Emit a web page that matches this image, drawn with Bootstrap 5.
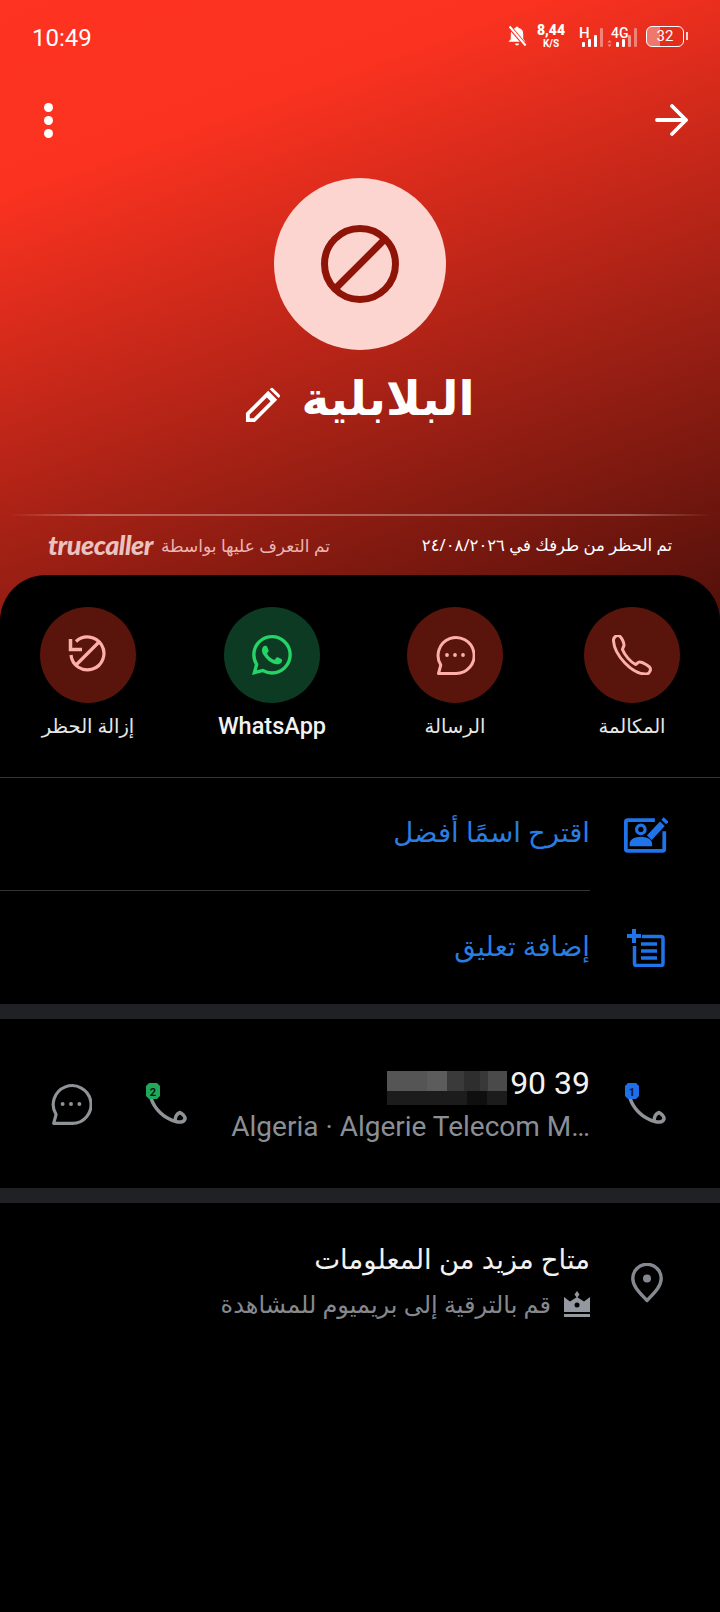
<!DOCTYPE html>
<html lang="ar" dir="rtl">
<head>
    <meta charset="UTF-8">
    <meta name="viewport" content="width=device-width, initial-scale=1.0">
    <title>Truecaller</title>
    <link rel="stylesheet" href="https://cdn.jsdelivr.net/npm/bootstrap@5.3.0/dist/css/bootstrap.min.css">
    <style>
        body { width: 720px; height: 1612px; background: #000; font-family: "Noto Sans", "DejaVu Sans", sans-serif; overflow: hidden; }
        .hero { height: 621px; background: linear-gradient(160deg, #fe3320 0%, #fb3220 22%, #50100a 100%); color: #fff; }
        .status-bar { height: 72px; padding: 0 32px 0 32px; font-family: Roboto, sans-serif; }
        .clock { font-size: 24px; font-weight: 400; }
        .speed { width: 30px; font-weight: 700; line-height: 1; text-align: center; margin: 0 0 0 9px; }
        .speed b { display: block; font-size: 14px; }
        .speed i { display: block; font-size: 10px; font-style: normal; margin-top: 2px; }
        .sig-h { margin-left: 13px; }
        .batt { width: 38px; height: 21px; border: 1.5px solid #fff; border-radius: 6px; font-size: 15px; line-height: 18px; text-align: center; margin-left: 7px; background: linear-gradient(90deg, rgba(255,255,255,.35) 0 36%, transparent 36%); }
        .batt-nub { width: 2px; height: 8px; background: #fff; opacity: .8; margin-left: 2px; }
        .tool-row { height: 96px; padding: 0 32px 0 42px; }
        .dots { width: 12px; gap: 4px; }
        .dots span { width: 9px; height: 9px; border-radius: 50%; background: #fff; }
        .avatar { width: 172px; height: 172px; border-radius: 50%; background: #fdd5d0; margin: 10px auto 0; }
        .name-row { height: 164px; gap: 20px; padding-top: 19px; }
        .name-text { font-size: 47px; font-weight: 700; line-height: 56px; }
        .pen-icon { margin-top: 18px; }
        .hero-line { height: 2px; margin: 0 8px; background: linear-gradient(90deg, transparent, rgba(255,255,255,.32) 12%, rgba(255,255,255,.32) 88%, transparent); }
        .meta-row { height: 59px; padding: 0 48px; font-size: 16.500px; }
        .meta-soft { color: #eab5b0; gap: 8px; font-size: 17px; }
        .tc-logo { font-family: Lato, sans-serif; font-weight: 900; font-style: italic; font-size: 27px; letter-spacing: -.5px; direction: ltr; color: #eac2be; }
        .sheet { background: #000; border-radius: 46px 46px 0 0; margin-top: -46px; position: relative; color: #fff; }
        .action-grid { display: grid; grid-template-columns: 177px 183px 184px 96px; padding: 32px 40px 0; height: 202px; }
        .action { width: 96px; }
        .action-ring { width: 96px; height: 96px; border-radius: 50%; background: #59140b; color: #fdb0a8; }
        .ring-green { background: #0c3a22; color: #25d366; }
        .action-label { font-size: 19.500px; white-space: nowrap; color: #e6e6e6; margin-top: 10px; line-height: 26px; }
        .wa-label { font-family: Roboto, sans-serif; font-weight: 500; font-size: 23.500px; color: #f2f2f2; }
        .top-rule { height: 1px; background: #333; }
        .link-row { height: 113px; padding-right: 52px; color: #2a7de1; font-size: 27.500px; }
        .icon-cell { width: 44px; flex: none; margin-left: 34px; }
        .link-text { flex-grow: 1; height: 100%; padding-bottom: 4px; }
        .link-rule { border-bottom: 1px solid #333; }
        .band { height: 15px; background: #1f2124; }
        .num-row { height: 169px; padding-right: 52px; }
        .num-title { font-family: Roboto, sans-serif; font-size: 32px; color: #f2f2f2; line-height: 34px; gap: 3px; }
        .num-mask { width: 120px; height: 34px; transform: translateY(5px); background:
            linear-gradient(90deg, #1c1c1c 0 80px, #0f0f0f 80px 100px, #1c1c1c 100px) 0 100% / 100% 14px no-repeat,
            linear-gradient(90deg, #555 0 40px, #5c5c5c 40px 60px, #3a3a3a 60px 77px, #2e2e2e 77px 93px, #383838 93px 101px, #4a4a4a 101px) 0 0 / 100% 20px no-repeat; }
        .num-sub { font-family: Roboto, sans-serif; font-size: 28px; color: #8a8f96; line-height: 30px; margin-top: 12px; white-space: nowrap; }
        .num-side { width: 359px; flex: none; }
        .num-icons { margin-right: 43px; }
        .num-icon { width: 42px; flex: none; }
        .msg-gap { margin-right: 54px; }
        .info-row { padding: 40px 51px 0 0; }
        .pin-cell { margin-top: 20px; margin-left: 35px; }
        .info-title { font-size: 27.500px; line-height: 32px; color: #f2f2f2; }
        .info-sub { font-size: 24px; line-height: 30px; color: #85898f; gap: 13px; margin-top: 14px; }
    </style>
</head>
<body>
    <div class="hero">
        <!-- status bar -->
        <div class="status-bar d-flex align-items-center" dir="ltr">
            <span class="clock me-auto mt-1">10:49</span>
            <svg width="20" height="22" viewBox="0 0 20 22"><path d="M10 1.500a1.600 1.600 0 0 1 1.600 1.600 6 6 0 0 1 4.600 6v5l2.300 2.600H1.500l2.300-2.600v-5a6 6 0 0 1 4.600-6A1.600 1.600 0 0 1 10 1.500zM8 18.500h4a2 2 0 0 1-4 0z" fill="#fff"/><path d="M2 1l16 19" stroke="#f9321f" stroke-width="4"/><path d="M2.600 1.500l16 19" stroke="#fff" stroke-width="2"/></svg>
            <div class="speed"><b>8,44</b><i>K/S</i></div>
            <svg class="sig-h" width="28" height="24" viewBox="0 0 28 24" fill="#fff">
                <text x="0" y="14" font-family="Roboto, sans-serif" font-size="15" font-weight="500">H</text>
                <rect x="3" y="18" width="3" height="5" rx="1"/><rect x="9" y="15" width="3" height="8" rx="1"/><rect x="15" y="11" width="3" height="12" rx="1"/><rect x="21" y="4" width="3" height="19" rx="1" opacity=".4"/>
            </svg>
            <svg width="32" height="24" viewBox="0 0 32 24" fill="#fff">
                <text x="4" y="14" font-family="Roboto, sans-serif" font-size="14" font-weight="500">4G</text>
                <path d="M2.500 16l2 2.500h-4zM2.500 23l-2-2.500h4z" opacity=".5"/>
                <rect x="9" y="18" width="3" height="5" rx="1"/><rect x="15" y="15" width="3" height="8" rx="1"/><rect x="21" y="11" width="3" height="12" rx="1" opacity=".5"/><rect x="27" y="4" width="3" height="19" rx="1" opacity=".4"/>
            </svg>
            <div class="batt">32</div>
            <div class="batt-nub"></div>
        </div>

        <!-- back and menu -->
        <div class="tool-row d-flex align-items-center justify-content-between" dir="ltr">
            <div class="dots d-flex flex-column align-items-center"><span></span><span></span><span></span></div>
            <svg width="33" height="32" viewBox="0 0 33 32" fill="none" stroke="#fff" stroke-width="3.800" stroke-linecap="round" stroke-linejoin="round"><path d="M2 16h29M17 2l14 14-14 14"/></svg>
        </div>

        <div class="avatar d-flex align-items-center justify-content-center">
            <svg width="80" height="80" viewBox="0 0 80 80" fill="none" stroke="#8e1408" stroke-width="7"><circle cx="40" cy="40" r="35.500"/><path d="M15 65L65 15"/></svg>
        </div>

        <div class="name-row d-flex align-items-start justify-content-center">
            <span class="name-text">البلابلية</span>
            <svg class="pen-icon" width="36" height="36" viewBox="0 0 38 38" fill="#fff"><path d="M1 37v-9.500L24.500 4 34 13.500 10.500 37zM5 33h4l18-18-4-4L5 29zM27 1.500a2 2 0 0 1 2.800 0l6.500 6.500a2 2 0 0 1 0 2.800L35.500 11.500 26 2.500z" fill-rule="evenodd"/></svg>
        </div>

        <div class="hero-line"></div>
        <div class="meta-row d-flex align-items-center justify-content-between">
            <span>تم الحظر من طرفك في ٢٤/٠٨/٢٠٢٦</span>
            <span class="meta-soft d-flex align-items-center">تم التعرف عليها بواسطة <span class="tc-logo">truecaller</span></span>
        </div>
    </div>

    <div class="sheet">
        <div class="action-grid">
            <div class="action d-flex flex-column align-items-center">
                <div class="action-ring d-flex align-items-center justify-content-center">
                    <svg width="40" height="40" viewBox="0 0 40 40" fill="none" stroke="currentColor" stroke-width="3"><path d="M1.500 6C1 2 5-.5 7.500 1c2 1.500 4.500 6 4.500 9 0 2-1.500 3-1.500 4.500 2 5.500 8 12.500 13 15 1.500-.5 2.500-3 4.500-2.500 3 .5 7 3 9.500 5 2 2 .5 6.500-3 7C20 39.500 2.500 20 1.500 6z" stroke-linejoin="round"/></svg>
                </div>
                <span class="action-label">المكالمة</span>
            </div>
            <div class="action d-flex flex-column align-items-center">
                <div class="action-ring d-flex align-items-center justify-content-center">
                    <svg width="40" height="40" viewBox="0 0 40 40" fill="none" stroke="currentColor" stroke-width="3"><path d="M3.500 38.500H21A18 18 0 1 0 5.800 30z" stroke-linejoin="round"/><g fill="currentColor" stroke="none"><circle cx="12" cy="20" r="1.900"/><circle cx="20" cy="20" r="1.900"/><circle cx="28" cy="20" r="1.900"/></g></svg>
                </div>
                <span class="action-label">الرسالة</span>
            </div>
            <div class="action d-flex flex-column align-items-center">
                <div class="action-ring ring-green d-flex align-items-center justify-content-center">
                    <svg width="40" height="40" viewBox="0 0 16 16" fill="currentColor"><path d="M13.601 2.326A7.854 7.854 0 0 0 7.994 0C3.627 0 .068 3.558.064 7.926c0 1.399.366 2.760 1.057 3.965L0 16l4.204-1.102a7.933 7.933 0 0 0 3.790.965h.004c4.368 0 7.926-3.558 7.930-7.930A7.898 7.898 0 0 0 13.600 2.326zM7.994 14.521a6.573 6.573 0 0 1-3.356-.920l-.240-.144-2.494.654.666-2.433-.156-.251a6.560 6.560 0 0 1-1.007-3.505c0-3.626 2.957-6.584 6.591-6.584a6.560 6.560 0 0 1 4.660 1.931 6.557 6.557 0 0 1 1.928 4.660c-.004 3.639-2.961 6.592-6.592 6.592zm3.615-4.934c-.197-.099-1.170-.578-1.353-.646-.182-.065-.315-.099-.445.099-.133.197-.513.646-.627.775-.114.133-.232.148-.430.050-.197-.100-.836-.308-1.592-.985-.590-.525-.985-1.175-1.103-1.372-.114-.198-.011-.304.088-.403.087-.088.197-.232.296-.346.100-.114.133-.198.198-.330.065-.134.034-.248-.015-.347-.050-.099-.445-1.076-.612-1.470-.160-.389-.323-.335-.445-.340-.114-.007-.247-.007-.380-.007a.729.729 0 0 0-.529.247c-.182.198-.691.677-.691 1.654 0 .977.710 1.916.810 2.049.098.133 1.394 2.132 3.383 2.992.470.205.840.326 1.129.418.475.152.904.129 1.246.080.380-.058 1.171-.480 1.338-.943.164-.464.164-.860.114-.943-.049-.084-.182-.133-.380-.232z"/></svg>
                </div>
                <span class="action-label wa-label">WhatsApp</span>
            </div>
            <div class="action d-flex flex-column align-items-center">
                <div class="action-ring d-flex align-items-center justify-content-center">
                    <svg width="40" height="40" viewBox="0 0 40 40" fill="none" stroke="currentColor" stroke-width="3.200"><path d="M8 6.500A16.500 16.500 0 1 1 3 20"/><path d="M31 7L8 30"/><path d="M2.500 4v10.500H14" stroke-width="3.500"/></svg>
                </div>
                <span class="action-label">إزالة الحظر</span>
            </div>
        </div>

        <div class="top-rule"></div>

        <div class="link-row d-flex align-items-center">
            <div class="icon-cell d-flex justify-content-center">
                <svg width="47" height="38" viewBox="0 0 47 38" fill="none"><path d="M33 3H4a2 2 0 0 0-2 2v29a2 2 0 0 0 2 2h37a2 2 0 0 0 2-2V15" stroke="#1f74ea" stroke-width="4"/><circle cx="18" cy="13" r="4.500" stroke="#1f74ea" stroke-width="3.500"/><path d="M6 31v-3c0-4 6-7 12-7s12 3 12 7v3z" fill="#1f74ea"/><path d="M27 22L41 7" stroke="#1f74ea" stroke-width="7"/><path d="M42.500 5.200L45 2.500" stroke="#1f74ea" stroke-width="7"/></svg>
            </div>
            <div class="link-text link-rule d-flex align-items-center">اقترح اسمًا أفضل</div>
        </div>
        <div class="link-row d-flex align-items-center">
            <div class="icon-cell d-flex justify-content-center">
                <svg width="38" height="38" viewBox="0 0 38 38" fill="none" stroke="#1f74ea" stroke-width="3.500"><path d="M15 7.500h19a2 2 0 0 1 2 2v25a2 2 0 0 1-2 2H9.500a2 2 0 0 1-2-2V17"/><path d="M0 7h14M7 0v14" stroke-width="4"/><path d="M14 15h16M14 22h16M14 29h16"/></svg>
            </div>
            <div class="link-text d-flex align-items-center">إضافة تعليق</div>
        </div>

        <div class="band"></div>

        <div class="num-row d-flex align-items-center">
            <div class="icon-cell d-flex justify-content-center">
                <svg width="42" height="42" viewBox="0 0 42 42" fill="none"><path d="M5 15C8 25 17 35 30 38.500c3 1 8 1 9-2.500.500-2.500-3-5.500-5-6.500-3 1-5.500 4.500-4.500 9" stroke="#8f9296" stroke-width="3.500" stroke-linejoin="round"/><path d="M3 0h8l3 3v10l-3 3H3l-3-3V3z" fill="#1f6fe8"/><text x="7" y="12.500" font-family="Roboto, sans-serif" font-size="11" font-weight="700" fill="#0a1c33" text-anchor="middle">1</text></svg>
            </div>
            <div class="num-side d-flex flex-column align-items-start">
                <div class="num-title d-flex align-items-center"><span dir="ltr">90 39</span><div class="num-mask"></div></div>
                <div class="num-sub" dir="ltr">Algeria · Algerie Telecom M…</div>
            </div>
            <div class="num-icons d-flex align-items-center">
                <svg class="num-icon" width="42" height="42" viewBox="0 0 42 42" fill="none"><path d="M5 15C8 25 17 35 30 38.500c3 1 8 1 9-2.500.500-2.500-3-5.500-5-6.500-3 1-5.500 4.500-4.500 9" stroke="#8f9296" stroke-width="3.500" stroke-linejoin="round"/><path d="M3 0h8l3 3v10l-3 3H3l-3-3V3z" fill="#1fa85c"/><text x="7" y="12.500" font-family="Roboto, sans-serif" font-size="11" font-weight="700" fill="#08200f" text-anchor="middle">2</text></svg>
                <svg class="num-icon msg-gap" width="42" height="42" viewBox="0 0 40 40" fill="none" stroke="#8f9296" stroke-width="3"><path d="M3.500 38.500H21A18 18 0 1 0 5.800 30z" stroke-linejoin="round"/><g fill="#8f9296" stroke="none"><circle cx="12" cy="20" r="1.900"/><circle cx="20" cy="20" r="1.900"/><circle cx="28" cy="20" r="1.900"/></g></svg>
            </div>
        </div>

        <div class="band"></div>

        <div class="info-row d-flex align-items-start">
            <div class="icon-cell pin-cell d-flex justify-content-center">
                <svg width="32" height="40" viewBox="0 0 32 40" fill="none"><path d="M16 37.500C9 30 1.800 23.500 1.800 15.500a14.200 14.200 0 0 1 28.400 0C30.200 23.500 23 30 16 37.500z" stroke="#85898f" stroke-width="3.400" stroke-linejoin="round"/><circle cx="16" cy="15.500" r="4" fill="#85898f"/></svg>
            </div>
            <div>
                <div class="info-title">متاح مزيد من المعلومات</div>
                <div class="info-sub d-flex align-items-center">
                    <svg width="26" height="26" viewBox="0 0 26 26" fill="#9499a1"><path d="M13 0l2.500 3.500L13 7l-2.500-3.500zM0 6l6 4.500L13 6l7 4.500L26 6v15H0zM0 23h26v3H0z"/><circle cx="13" cy="14" r="2.500" fill="#000"/></svg>
                    <span>قم بالترقية إلى بريميوم للمشاهدة</span>
                </div>
            </div>
        </div>
    </div>

    <script src="https://cdn.jsdelivr.net/npm/bootstrap@5.3.0/dist/js/bootstrap.bundle.min.js"></script>
</body>
</html>
